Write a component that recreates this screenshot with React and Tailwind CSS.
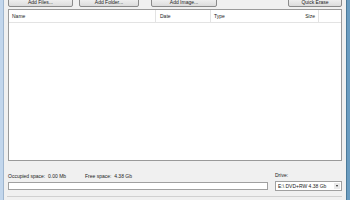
import React from "react";

function Btn({ label, className }) {
  return (
    <div
      className={`h-[10px] mt-[-3px] rounded-[2px] border border-[#8a8a8a] bg-gradient-to-b from-[#f4f4f4] to-[#dcdcdc] flex items-end justify-center pb-[1px] text-[5px] leading-[5px] text-[#222] ${className}`}
    >
      {label}
    </div>
  );
}

export default function App() {
  return (
    <div
      className="w-[350px] h-[200px] bg-[#f0f0f0] flex overflow-hidden"
      style={{ fontFamily: '"Liberation Sans", Arial, sans-serif' }}
    >
      <div className="w-[4px] h-full bg-[#c2d6ec] border-r border-[#9fb6cf]" />
      <div className="flex-1 flex flex-col pl-[3px] pr-[4px]">
        <div className="h-[7px] flex items-start text-[5px]">
          <Btn label="Add Files..." className="w-[65px] ml-[1px]" />
          <Btn label="Add Folder..." className="w-[60px] ml-[6px]" />
          <Btn label="Add Image..." className="w-[66px] ml-[12px]" />
          <div className="flex-1" />
          <Btn label="Quick Erase" className="w-[54px]" />
        </div>
        <div className="mt-[2px] h-[152px] border border-[#9a9a9a] bg-white ml-[1px] flex flex-col">
          <div className="h-[13px] flex text-[5px] leading-[5px] text-[#222] border-b border-[#e3e3e3] items-center">
            <div className="w-[147px] pl-[3px] h-full flex items-center border-r border-[#e3e3e3]">Name</div>
            <div className="w-[55px] pl-[4px] h-full flex items-center border-r border-[#e3e3e3]">Date</div>
            <div className="w-[80px] pl-[3px] h-full flex items-center">Type</div>
            <div className="w-[28px] pr-[3px] h-full flex items-center justify-end border-r border-[#e3e3e3]">Size</div>
            <div className="flex-1" />
          </div>
        </div>
        <div className="mt-[12px] flex text-[5px] leading-[6px] text-[#222]">
          <div className="flex flex-col flex-1 ml-[1px]">
            <div className="flex h-[6px]">
              <span className="w-[77px]">Occupied space:&nbsp;&nbsp;0.00 Mb</span>
              <span>Free space:&nbsp;&nbsp;4.38 Gb</span>
            </div>
            <div className="mt-[3px] h-[8px] w-[260px] border border-[#a0a0a0] bg-white" />
          </div>
          <div className="flex flex-col w-[67px]">
            <div className="h-[6px] mt-[-1px]">Drive:</div>
            <div className="mt-[3px] h-[10px] border border-[#a0a0a0] bg-white flex items-center pl-[2px] pr-[1px]">
              <span className="flex-1">E:\ DVD+RW 4.38 Gb</span>
              <span className="w-[6px] h-[6px] bg-[#eaeaea] flex items-center justify-center">
                <span className="w-0 h-0 border-l-[1.5px] border-r-[1.5px] border-t-[2px] border-l-transparent border-r-transparent border-t-[#222]" />
              </span>
            </div>
          </div>
        </div>
        <div className="mt-auto h-[4px] border-t border-[#d0d0d0]" />
      </div>
      <div className="w-[4px] h-full border-l border-[#4b7a99] bg-[#6a9cc0]" />
    </div>
  );
}
